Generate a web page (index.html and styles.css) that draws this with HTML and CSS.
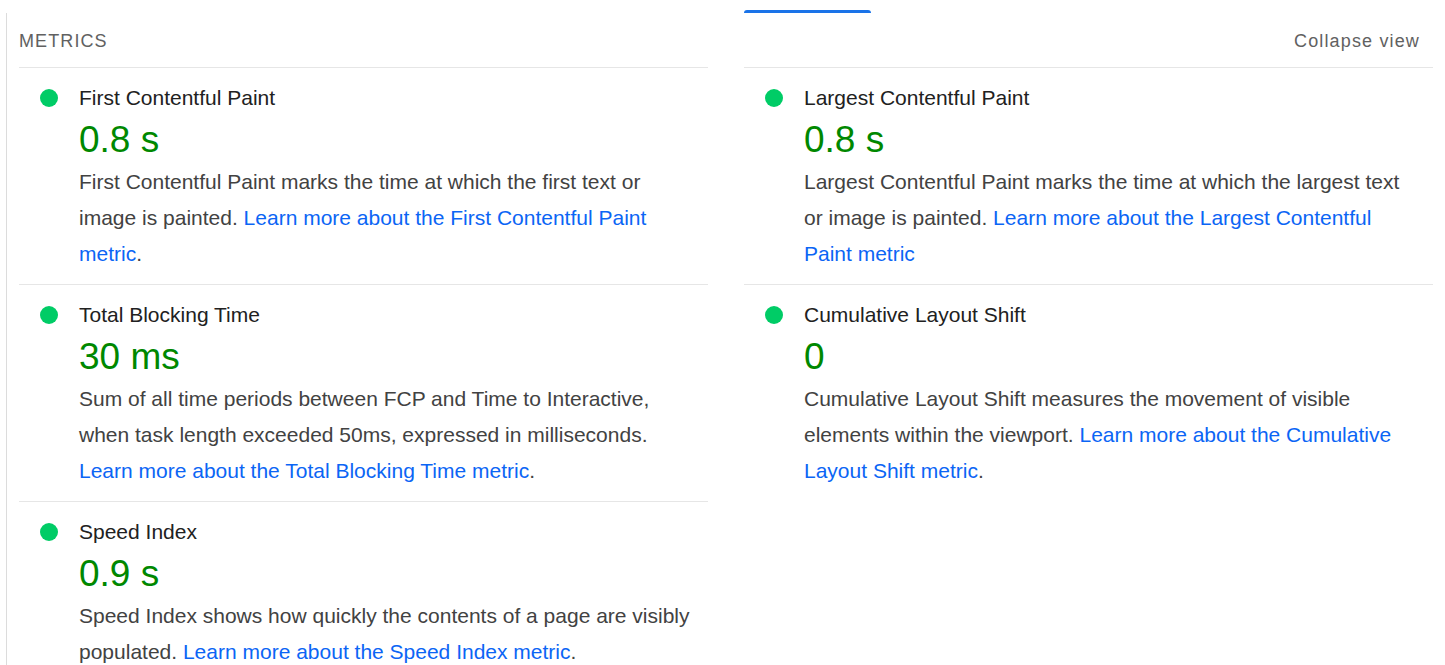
FILE: index.html
```html
<!DOCTYPE html>
<html lang="en">
<head>
<meta charset="utf-8">
<title>Metrics</title>
<link rel="stylesheet" href="styles.css">
</head>
<body>
<div class="tabs">
  <div class="tab-cell"></div>
  <div class="tab-cell"><span class="tab-indicator"></span></div>
</div>
<section class="panel">
  <div class="grid">
    <div class="header"><span class="header-title">METRICS</span></div>
    <div class="header header-right"><span class="toggle">Collapse view</span></div>

    <div class="metric">
      <span class="dot"></span>
      <div class="metric-body">
        <div class="metric-title">First Contentful Paint</div>
        <div class="metric-value">0.8 s</div>
        <div class="metric-desc">First Contentful Paint marks the time at which the first text or image is painted. <a href="#" class="link">Learn more about the First Contentful Paint metric</a>.</div>
      </div>
    </div>
    <div class="metric">
      <span class="dot"></span>
      <div class="metric-body">
        <div class="metric-title">Largest Contentful Paint</div>
        <div class="metric-value">0.8 s</div>
        <div class="metric-desc">Largest Contentful Paint marks the time at which the largest text or image is painted. <a href="#" class="link">Learn more about the Largest Contentful Paint metric</a></div>
      </div>
    </div>
    <div class="metric">
      <span class="dot"></span>
      <div class="metric-body">
        <div class="metric-title">Total Blocking Time</div>
        <div class="metric-value">30 ms</div>
        <div class="metric-desc">Sum of all time periods between FCP and Time to Interactive, when task length exceeded 50ms, expressed in milliseconds. <a href="#" class="link">Learn more about the Total Blocking Time metric</a>.</div>
      </div>
    </div>
    <div class="metric metric-last">
      <span class="dot"></span>
      <div class="metric-body">
        <div class="metric-title">Cumulative Layout Shift</div>
        <div class="metric-value">0</div>
        <div class="metric-desc">Cumulative Layout Shift measures the movement of visible elements within the viewport. <a href="#" class="link">Learn more about the Cumulative Layout Shift metric</a>.</div>
      </div>
    </div>
    <div class="metric metric-last">
      <span class="dot"></span>
      <div class="metric-body">
        <div class="metric-title">Speed Index</div>
        <div class="metric-value">0.9 s</div>
        <div class="metric-desc">Speed Index shows how quickly the contents of a page are visibly populated. <a href="#" class="link">Learn more about the Speed Index metric</a>.</div>
      </div>
    </div>
  </div>
</section>
</body>
</html>
```

FILE: styles.css
```css
* { box-sizing: border-box; }

html, body {
  margin: 0;
  background: #ffffff;
}

body {
  font-family: "Liberation Sans", Arial, sans-serif;
  color: #212121;
  overflow: hidden;
}

.tabs {
  display: grid;
  grid-template-columns: 1fr 1fr;
  column-gap: 36px;
  padding: 10px 12px 0 19px;
  height: 13px;
}

.tab-cell {
  display: flex;
  align-items: flex-end;
}

.tab-indicator {
  display: block;
  width: 127px;
  height: 3px;
  background: #1a73e8;
  border-radius: 3px 3px 0 0;
}

.panel {
  margin-left: 6px;
  border-left: 1px solid #dcdcdc;
  padding: 0 12px;
  min-height: 652px;
}

.grid {
  display: grid;
  grid-template-columns: 1fr 1fr;
  column-gap: 36px;
}

.header {
  height: 55px;
  display: flex;
  align-items: center;
  border-bottom: 1px solid #e6e6e6;
  padding-top: 3px;
}

.header-right {
  justify-content: flex-end;
  padding-right: 13px;
}

.header-title {
  font-size: 18px;
  letter-spacing: 1.1px;
  color: #616161;
}

.toggle {
  font-size: 18px;
  letter-spacing: 1.15px;
  color: #616161;
}

.metric {
  display: flex;
  align-items: flex-start;
  padding: 12px 0 12px 21px;
  border-bottom: 1px solid #e6e6e6;
}

.metric-last {
  border-bottom: none;
}

.dot {
  flex: none;
  width: 18px;
  height: 18px;
  border-radius: 50%;
  background: #00cc66;
  margin-top: 9px;
  margin-right: 21px;
}

.metric-body {
  flex: 1;
  min-width: 0;
  padding-right: 12px;
}

.metric-title {
  font-size: 21px;
  line-height: 36px;
  color: #212121;
}

.metric-value {
  font-size: 37px;
  line-height: 48px;
  color: #008800;
}

.metric-desc {
  font-size: 21px;
  line-height: 36px;
  color: #424242;
}

.link {
  color: #0b65f5;
  text-decoration: none;
}
```
